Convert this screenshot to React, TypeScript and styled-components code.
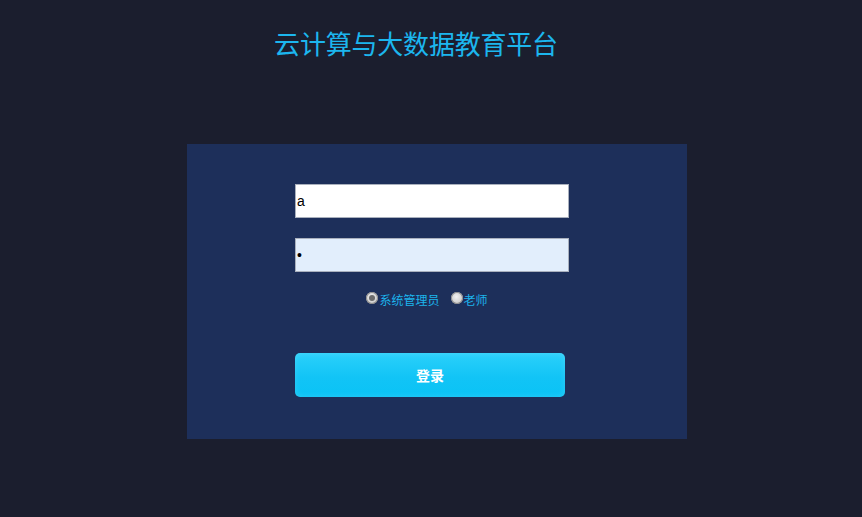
import React, { useState } from 'react'
import styled, { createGlobalStyle } from 'styled-components'

const GlobalStyle = createGlobalStyle`
  html, body {
    margin: 0;
    padding: 0;
    background-color: #1b1e2e;
  }
  body {
    font-family: "Noto Sans CJK SC", "Liberation Sans", sans-serif;
  }
`

const App: React.FC = () => {
  const [role, setRole] = useState('admin')

  return (
    <Page>
      <GlobalStyle />
      <Title>云计算与大数据教育平台</Title>

      <Panel>
        <Form>
          <TextInput type="text" defaultValue="a" />
          <TextInput type="password" defaultValue="a" filled />

          <RoleRow>
            <RoleLabel>
              <Radio
                type="radio"
                name="role"
                checked={role === 'admin'}
                onChange={() => setRole('admin')}
              />
              系统管理员
            </RoleLabel>
            <RoleLabel>
              <Radio
                type="radio"
                name="role"
                checked={role === 'teacher'}
                onChange={() => setRole('teacher')}
              />
              老师
            </RoleLabel>
          </RoleRow>

          <LoginBtn type="button">登录</LoginBtn>
        </Form>
      </Panel>
    </Page>
  )
}

const Page = styled.div`
  width: 100%;
  min-height: 100vh;
  display: flex;
  flex-direction: column;
  align-items: center;
  padding-top: 24px;
  box-sizing: border-box;
`

const Title = styled.h1`
  margin: 0 30px 0 0;
  font-size: 26px;
  line-height: 38px;
  font-weight: 400;
  color: #1cb6ee;
  letter-spacing: -0.2px;
`

const Panel = styled.div`
  margin-top: 82px;
  margin-left: 12px;
  width: 500px;
  height: 295px;
  box-sizing: border-box;
  background-color: #1d2f5a;
  padding: 40px 0 0 108px;
`

const Form = styled.div`
  display: flex;
  flex-direction: column;
  align-items: flex-start;
`

const TextInput = styled.input<{ filled?: boolean }>`
  width: 274px;
  height: 34px;
  box-sizing: border-box;
  margin: 0 0 20px 0;
  padding: 0 1px;
  border: 1px solid #a9b0bd;
  outline: none;
  background-color: ${(p) => (p.filled ? '#e2eefc' : '#ffffff')};
  font-family: "Liberation Sans", "Noto Sans CJK SC", sans-serif;
  font-size: 14px;
  color: #000;
`

const RoleRow = styled.div`
  width: 264px;
  display: flex;
  justify-content: center;
  gap: 11px;
  margin-top: -1px;
`

const RoleLabel = styled.label`
  display: flex;
  align-items: center;
  font-size: 12px;
  line-height: 18px;
  color: #1cb4ec;
  cursor: pointer;
`

const Radio = styled.input`
  appearance: none;
  width: 12px;
  height: 12px;
  margin: -4px 1px 0 0;
  border-radius: 50%;
  background: radial-gradient(circle at 45% 40%, #f2f2f2 0%, #cfcfcf 60%, #9d9d9d 100%);
  box-shadow: inset 0 0 0 1px #8c8c8c;
  position: relative;

  &:checked::after {
    content: '';
    position: absolute;
    left: 3px;
    top: 3px;
    width: 6px;
    height: 6px;
    border-radius: 50%;
    background: #6b6b6b;
  }
`

const LoginBtn = styled.button`
  margin-top: 44px;
  width: 270px;
  height: 44px;
  border: none;
  border-radius: 5px;
  background: linear-gradient(180deg, #2bd0fa 0%, #12c4f6 55%, #0ac3f5 100%);
  box-shadow: inset 0 0 6px rgba(255, 255, 255, 0.15);
  color: #fff;
  font-family: "Noto Sans CJK SC", sans-serif;
  font-size: 14px;
  font-weight: 700;
  cursor: pointer;
`

export default App
